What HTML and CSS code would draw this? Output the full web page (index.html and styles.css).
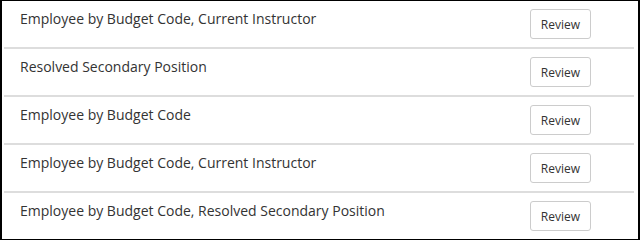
FILE: index.html
```html
<!DOCTYPE html>
<html lang="en">
<head>
  <meta charset="UTF-8">
  <meta name="viewport" content="width=device-width, initial-scale=1.0">
  <title>Reports</title>
  <link rel="stylesheet" href="styles.css">
</head>
<body>
  <div class="frame">
    <ul class="report-list">
      <li class="report-row">
        <span class="report-name">Employee by Budget Code, Current Instructor</span>
        <button class="review-btn">Review</button>
      </li>
      <li class="report-row">
        <span class="report-name">Resolved Secondary Position</span>
        <button class="review-btn">Review</button>
      </li>
      <li class="report-row">
        <span class="report-name">Employee by Budget Code</span>
        <button class="review-btn">Review</button>
      </li>
      <li class="report-row">
        <span class="report-name">Employee by Budget Code, Current Instructor</span>
        <button class="review-btn">Review</button>
      </li>
      <li class="report-row">
        <span class="report-name">Employee by Budget Code, Resolved Secondary Position</span>
        <button class="review-btn">Review</button>
      </li>
    </ul>
  </div>
</body>
</html>
```

FILE: styles.css
```css
* {
  box-sizing: border-box;
}
body {
  margin: 0;
  font-family: "Open Sans", Arial, sans-serif;
  color: #333333;
  background: #ffffff;
}
.frame {
  width: 640px;
  height: 240px;
  border-style: solid;
  border-color: #000000;
  border-width: 1px 2px 1px 2px;
  background: #ffffff;
}
.report-list {
  list-style: none;
  margin: 0;
  padding: 0 4px 0 2px;
}
.report-row {
  display: flex;
  align-items: flex-start;
  justify-content: space-between;
  padding: 8px 43px 8px 16px;
  border-bottom: 2px solid #dddddd;
}
.report-row:last-child {
  border-bottom: none;
}
.report-name {
  font-size: 14px;
  line-height: 20px;
}
.review-btn {
  height: 30px;
  padding: 0 10px;
  font-family: "Open Sans", Arial, sans-serif;
  font-size: 12px;
  color: #333333;
  background: #ffffff;
  border: 1px solid #cccccc;
  border-radius: 3px;
  cursor: pointer;
}
.review-btn:hover {
  background: #f2f2f2;
}
```
